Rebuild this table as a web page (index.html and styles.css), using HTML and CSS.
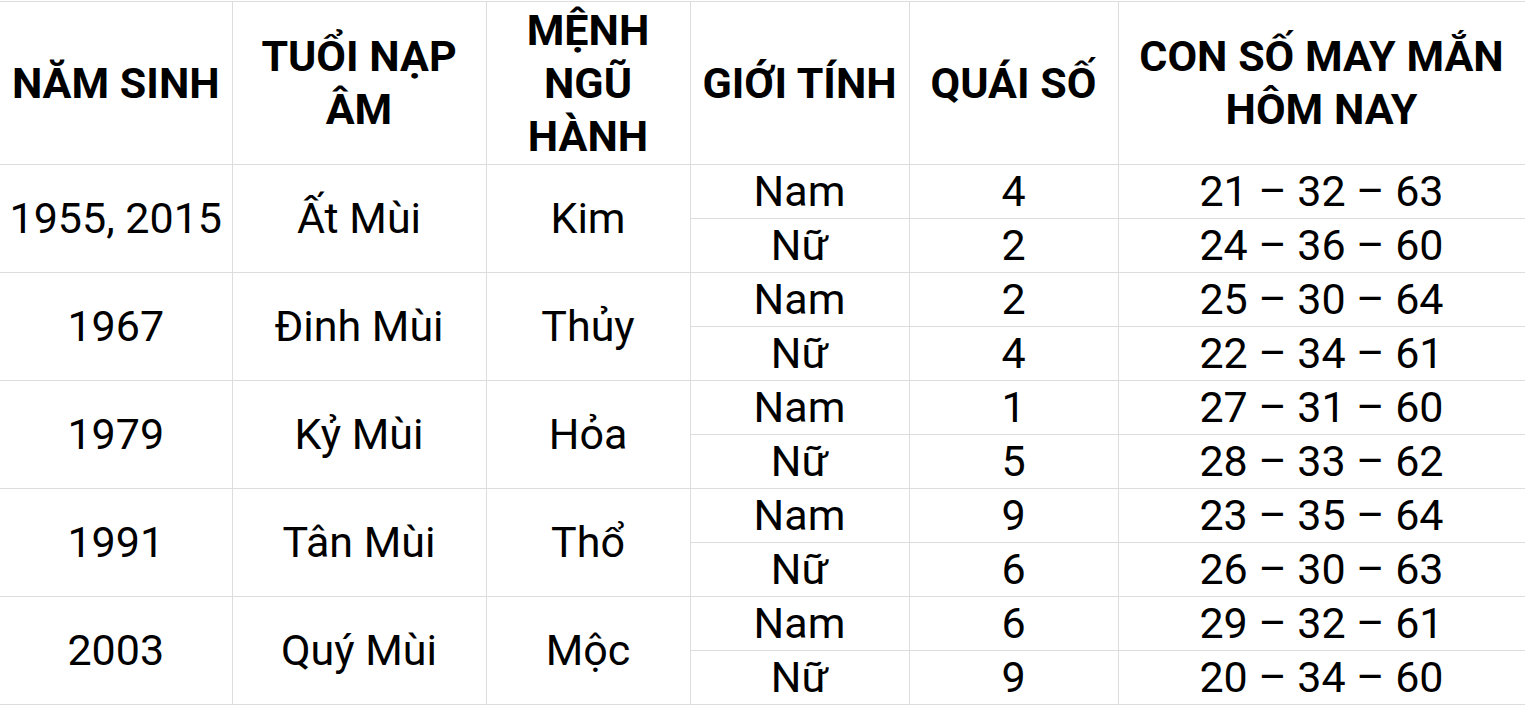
FILE: index.html
```html
<!DOCTYPE html>
<html lang="vi">
<head>
<meta charset="utf-8">
<title>Con số may mắn</title>
<link rel="stylesheet" href="styles.css">
</head>
<body>
<table class="lucky">
  <colgroup>
    <col class="c1"><col class="c2"><col class="c3"><col class="c4"><col class="c5"><col class="c6">
  </colgroup>
  <thead>
    <tr>
      <th>NĂM SINH</th>
      <th>TUỔI NẠP<br>ÂM</th>
      <th>MỆNH<br>NGŨ<br>HÀNH</th>
      <th>GIỚI TÍNH</th>
      <th>QUÁI SỐ</th>
      <th>CON SỐ MAY MẮN<br>HÔM NAY</th>
    </tr>
  </thead>
  <tbody>
    <tr><td rowspan="2">1955, 2015</td><td rowspan="2">Ất Mùi</td><td rowspan="2">Kim</td><td>Nam</td><td>4</td><td>21 – 32 – 63</td></tr>
    <tr><td>Nữ</td><td>2</td><td>24 – 36 – 60</td></tr>
    <tr><td rowspan="2">1967</td><td rowspan="2">Đinh Mùi</td><td rowspan="2">Thủy</td><td>Nam</td><td>2</td><td>25 – 30 – 64</td></tr>
    <tr><td>Nữ</td><td>4</td><td>22 – 34 – 61</td></tr>
    <tr><td rowspan="2">1979</td><td rowspan="2">Kỷ Mùi</td><td rowspan="2">Hỏa</td><td>Nam</td><td>1</td><td>27 – 31 – 60</td></tr>
    <tr><td>Nữ</td><td>5</td><td>28 – 33 – 62</td></tr>
    <tr><td rowspan="2">1991</td><td rowspan="2">Tân Mùi</td><td rowspan="2">Thổ</td><td>Nam</td><td>9</td><td>23 – 35 – 64</td></tr>
    <tr><td>Nữ</td><td>6</td><td>26 – 30 – 63</td></tr>
    <tr><td rowspan="2">2003</td><td rowspan="2">Quý Mùi</td><td rowspan="2">Mộc</td><td>Nam</td><td>6</td><td>29 – 32 – 61</td></tr>
    <tr><td>Nữ</td><td>9</td><td>20 – 34 – 60</td></tr>
  </tbody>
</table>
</body>
</html>
```
FILE: styles.css
```css
html, body {
  margin: 0;
  padding: 0;
  background: #fff;
}
body {
  padding-top: 1px;
  font-family: Roboto, "Liberation Sans", sans-serif;
  color: #000;
}
.lucky {
  border-collapse: collapse;
  table-layout: fixed;
  width: 1525px;
}
.c1 { width: 232px; }
.c2 { width: 254px; }
.c3 { width: 204px; }
.c4 { width: 219px; }
.c5 { width: 209px; }
.c6 { width: 407px; }
.lucky th,
.lucky td {
  border: 1px solid #dddddd;
  text-align: center;
  vertical-align: middle;
  font-size: 43px;
  padding: 0;
  white-space: nowrap;
}
.lucky tr > :first-child {
  border-left: none;
}
.lucky th {
  font-weight: 700;
  line-height: 53px;
  height: 162px;
  padding: 0;
}
.lucky td {
  font-weight: 400;
  line-height: 53px;
  height: 53px;
}
```
